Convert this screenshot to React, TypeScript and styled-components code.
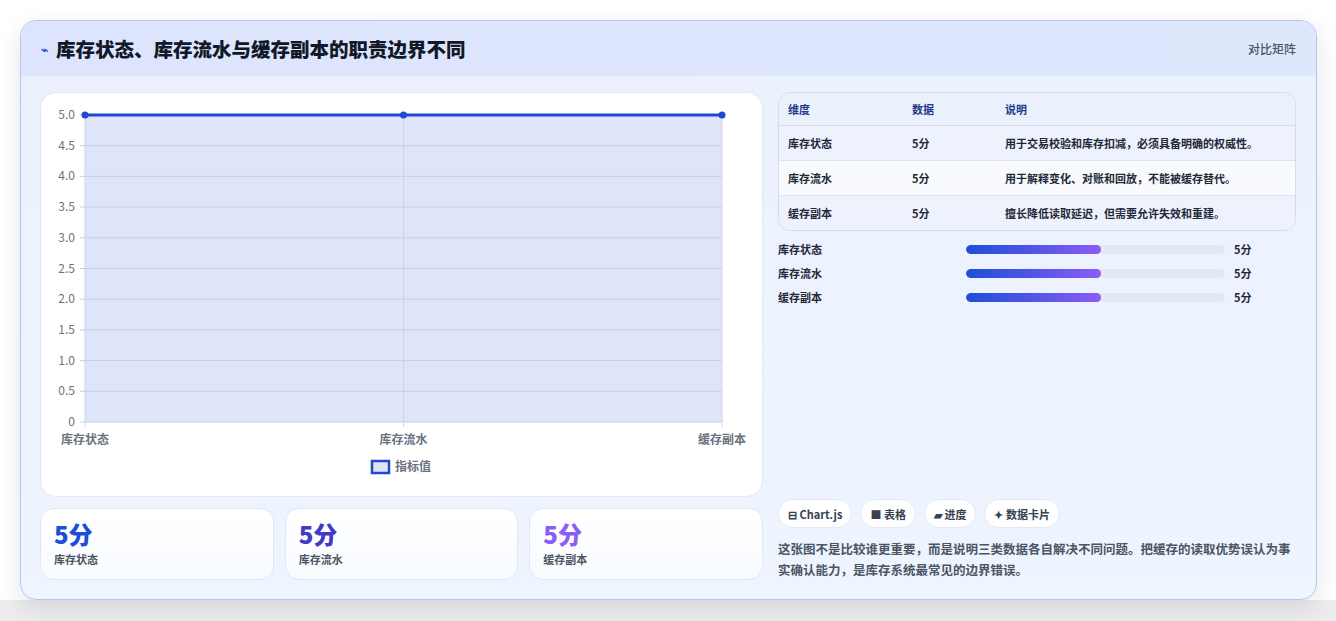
import React from "react";
import styled, { createGlobalStyle } from "styled-components";

const Global = createGlobalStyle`
  body { margin: 0; background: #f3f4f6; font-family: "Noto Sans CJK SC", "Noto Sans", sans-serif; }
`;

const Page = styled.div`
  padding: 20px 20px 21px 20px;
  background: linear-gradient(#ffffff 0, #ffffff 600px, #ededed 600px);
  width: 1336px;
  box-sizing: border-box;
`;

const Card = styled.div`
  width: 1295px;
  border: 1px solid #b7c4ef;
  border-radius: 16px;
  overflow: hidden;
  background: linear-gradient(180deg, #ebf0fd 0%, #eef5ff 100%);
  box-shadow: 0 8px 24px rgba(30, 41, 80, 0.12);
`;

const Header = styled.div`
  height: 55px;
  display: flex;
  align-items: center;
  justify-content: space-between;
  padding: 0 20px;
  background: linear-gradient(90deg, #dde4fd, #dde8fd);
`;

const Title = styled.h1`
  margin: 0;
  font-size: 19.5px;
  font-weight: 800;
  color: #111827;
  display: flex;
  align-items: center;
  gap: 8px;
`;

const Icon = styled.span`
  color: #2f4fd6;
  font-size: 12px;
`;

const Tag = styled.span`
  font-size: 12px;
  font-weight: 500;
  color: #4b5563;
`;

const Body = styled.div`
  display: grid;
  grid-template-columns: 723px 518px;
  gap: 15px;
  padding: 16px 19px 19px 19px;
`;

const Col = styled.div`
  display: flex;
  flex-direction: column;
`;

const ChartPanel = styled.div`
  height: 403px;
  background: #fff;
  border: 1px solid #e3e8f4;
  border-radius: 16px;
`;

const Stats = styled.div`
  display: grid;
  grid-template-columns: repeat(3, 1fr);
  gap: 11px;
  margin-top: 11px;
`;

const Stat = styled.div`
  height: 72px;
  box-sizing: border-box;
  padding: 9px 13px;
  border: 1px solid #e1e7f5;
  border-radius: 14px;
  background: linear-gradient(180deg, #ffffff, #f8fbff);
`;

const StatValue = styled.div<{ $c: string }>`
  font-size: 24px;
  font-weight: 800;
  line-height: 32px;
  color: ${(p) => p.$c};
`;

const StatLabel = styled.div`
  font-size: 11px;
  font-weight: 600;
  color: #4b5563;
  margin-top: 1px;
`;

const Table = styled.table`
  width: 100%;
  border-collapse: separate;
  border-spacing: 0;
  border: 1px solid #d6dcee;
  border-radius: 12px;
  overflow: hidden;
  font-size: 11px;
  font-weight: 600;
  color: #1f2937;
`;

const Th = styled.th`
  text-align: left;
  font-weight: 700;
  color: #1e3a8a;
  height: 32px;
  padding: 0 9px;
  background: #eaf1fd;
  border-bottom: 1px solid #d6dcee;
`;

const Td = styled.td<{ $alt?: boolean; $last?: boolean }>`
  height: 34px;
  padding: 0 9px;
  background: ${(p) => (p.$alt ? "#f8fafd" : "#edf2fd")};
  border-bottom: ${(p) => (p.$last ? "none" : "1px solid #dde3f1")};
`;

const Bars = styled.div`
  display: flex;
  flex-direction: column;
  gap: 8px;
  margin-top: 10px;
`;

const BarRow = styled.div`
  display: grid;
  grid-template-columns: 179px 259px 1fr;
  gap: 0 9px;
  align-items: center;
  font-size: 11px;
  font-weight: 600;
  color: #1f2937;
  height: 16px;
`;

const Track = styled.div`
  height: 9px;
  border-radius: 5px;
  background: #e3e8f0;
  overflow: hidden;
`;

const Fill = styled.div`
  height: 100%;
  border-radius: 5px;
  background: linear-gradient(90deg, #1d4ed8, #8b5cf6);
`;

const Spacer = styled.div`
  flex: 1;
`;

const Chips = styled.div`
  display: flex;
  gap: 8px;
`;

const Chip = styled.span`
  height: 29px;
  box-sizing: border-box;
  padding: 0 9px;
  display: inline-flex;
  align-items: center;
  gap: 4px;
  border: 1px solid #e3e8f4;
  border-radius: 15px;
  background: #fff;
  font-size: 11px;
  font-weight: 600;
  color: #374151;
`;

const Note = styled.p`
  margin: 10px 0 0;
  font-size: 12.5px;
  line-height: 21px;
  color: #4b5563;
  font-weight: 600;
`;

const labels = ["库存状态", "库存流水", "缓存副本"];
const descs = [
  "用于交易校验和库存扣减，必须具备明确的权威性。",
  "用于解释变化、对账和回放，不能被缓存替代。",
  "擅长降低读取延迟，但需要允许失效和重建。",
];

function Chart() {
  const x0 = 44, x1 = 681, yTop = 22, yBot = 329;
  const ticks = [5, 4.5, 4, 3.5, 3, 2.5, 2, 1.5, 1, 0.5, 0];
  const xs = [x0, (x0 + x1) / 2, x1];
  return (
    <svg width="723" height="403" style={{ display: "block" }} fontFamily="'Noto Sans CJK SC', sans-serif">
      <rect x={x0} y={yTop} width={x1 - x0} height={yBot - yTop} fill="#dfe5f8" />
      {ticks.map((t, i) => {
        const y = yTop + (i * (yBot - yTop)) / 10;
        return (
          <g key={t}>
            <line x1={x0 - 5} x2={x1} y1={y} y2={y} stroke="#c7cfe2" strokeWidth="1" />
            <text x={x0 - 10} y={y + 4} textAnchor="end" fontSize="12" fill="#6b7280">
              {t === 0 ? "0" : t.toFixed(1)}
            </text>
          </g>
        );
      })}
      {xs.map((x, i) => (
        <g key={i}>
          <line x1={x} x2={x} y1={yTop} y2={yBot + 5} stroke="#cdd5e8" />
          <text x={x} y={yBot + 22} textAnchor="middle" fontSize="12" fill="#6b7280" fontWeight="600">
            {labels[i]}
          </text>
        </g>
      ))}
      <line x1={x0} x2={x1} y1={yTop} y2={yTop} stroke="#2148d1" strokeWidth="3" />
      {xs.map((x, i) => (
        <circle key={i} cx={x} cy={yTop} r="3.5" fill="#2148d1" />
      ))}
      <rect x="331" y="368" width="17" height="12" fill="#dfe5f8" stroke="#2148d1" strokeWidth="2.5" />
      <text x="354" y="378" fontSize="12" fill="#6b7280" fontWeight="600">指标值</text>
    </svg>
  );
}

export default function App() {
  return (
    <>
      <Global />
      <Page>
        <Card>
          <Header>
            <Title>
              <Icon>⌁</Icon>库存状态、库存流水与缓存副本的职责边界不同
            </Title>
            <Tag>对比矩阵</Tag>
          </Header>
          <Body>
            <Col>
              <ChartPanel>
                <Chart />
              </ChartPanel>
              <Stats>
                {labels.map((l, i) => (
                  <Stat key={l}>
                    <StatValue $c={["#1d4ed8", "#4338ca", "#8b5cf6"][i]}>5分</StatValue>
                    <StatLabel>{l}</StatLabel>
                  </Stat>
                ))}
              </Stats>
            </Col>
            <Col>
              <Table>
                <thead>
                  <tr>
                    <Th style={{ width: 106 }}>维度</Th>
                    <Th style={{ width: 75 }}>数据</Th>
                    <Th>说明</Th>
                  </tr>
                </thead>
                <tbody>
                  {labels.map((l, i) => (
                    <tr key={l}>
                      <Td $alt={i === 1} $last={i === 2}>{l}</Td>
                      <Td $alt={i === 1} $last={i === 2}>5分</Td>
                      <Td $alt={i === 1} $last={i === 2}>{descs[i]}</Td>
                    </tr>
                  ))}
                </tbody>
              </Table>
              <Bars>
                {labels.map((l) => (
                  <BarRow key={l}>
                    <span>{l}</span>
                    <Track>
                      <Fill style={{ width: "52%" }} />
                    </Track>
                    <span>5分</span>
                  </BarRow>
                ))}
              </Bars>
              <Spacer />
              <Chips>
                <Chip>⊟ Chart.js</Chip>
                <Chip>■ 表格</Chip>
                <Chip>▰ 进度</Chip>
                <Chip>✦ 数据卡片</Chip>
              </Chips>
              <Note>
                这张图不是比较谁更重要，而是说明三类数据各自解决不同问题。把缓存的读取优势误认为事实确认能力，是库存系统最常见的边界错误。
              </Note>
            </Col>
          </Body>
        </Card>
      </Page>
    </>
  );
}
